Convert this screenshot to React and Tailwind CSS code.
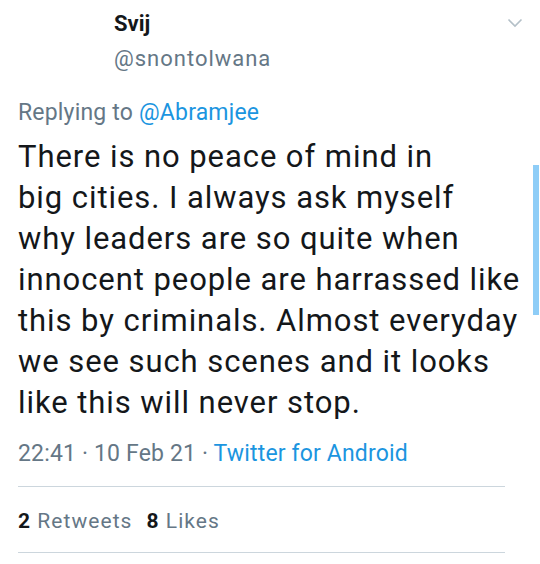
import { useState } from "react";

// Single tweet detail view (Twitter for Android, light theme)
const tweetLines = [
  "There is no peace of mind in",
  "big cities. I always ask myself",
  "why leaders are so quite when",
  "innocent people are harrassed like",
  "this by criminals. Almost everyday",
  "we see such scenes and it looks",
  "like this will never stop.",
];

export default function App() {
  const [liked] = useState(false);

  return (
    <div
      className="relative w-[540px] h-[564px] overflow-hidden bg-white"
      style={{ fontFamily: "Roboto, 'Noto Sans', sans-serif" }}
    >
      {/* Scrollbar thumb */}
      <div className="absolute right-[1px] top-[165px] w-[6px] h-[150px] bg-[#8ecdf7]" />

      <div className="pl-[18px] pr-[35px] pt-[10px]">
        {/* Header */}
        <div className="flex items-start">
          <div className="ml-[96px] flex-1">
            <div className="text-[22px] leading-[28px] font-bold text-[#14171a]">Svij</div>
            <div className="mt-[7px] text-[22px] leading-[28px] tracking-[0.045em] text-[#657786]">
              @snontolwana
            </div>
          </div>
          <button className="mt-[8px] mr-[-18px] text-[#b4c0c8]" title="More">
            <svg width="16" height="10" viewBox="0 0 16 10" fill="none">
              <path d="M1.5 1.5 L8 8 L14.5 1.5" stroke="currentColor" strokeWidth="1.6" />
            </svg>
          </button>
        </div>

        {/* Replying to */}
        <div className="mt-[25px] text-[23px] leading-[30px] tracking-[0.008em] text-[#657786]">
          Replying to <span className="text-[#1b95e0]">@Abramjee</span>
        </div>

        {/* Body */}
        <p className="mt-[8px] text-[31px] leading-[41px] tracking-[0.03em] text-[#14171a] whitespace-nowrap">
          {tweetLines.map((line) => (
            <span key={line} className="block">
              {line}
            </span>
          ))}
        </p>

        {/* Timestamp */}
        <div className="mt-[16px] text-[23px] leading-[30px] tracking-[0.007em] text-[#657786]">
          22:41 · 10 Feb 21 · <span className="text-[#1b95e0]">Twitter for Android</span>
        </div>

        <div className="mt-[17px] h-px bg-[#ccd6dd] w-[487px]" />

        {/* Stats */}
        <div className="mt-[20px] flex gap-[14px] text-[21px] leading-[28px] tracking-[0.05em] text-[#657786]">
          <span>
            <b className="font-bold text-[#14171a]">2</b> Retweets
          </span>
          <span>
            <b className="font-bold text-[#14171a]">{liked ? 9 : 8}</b> Likes
          </span>
        </div>

        <div className="mt-[17px] h-px bg-[#ccd6dd] w-[487px]" />
      </div>
    </div>
  );
}
